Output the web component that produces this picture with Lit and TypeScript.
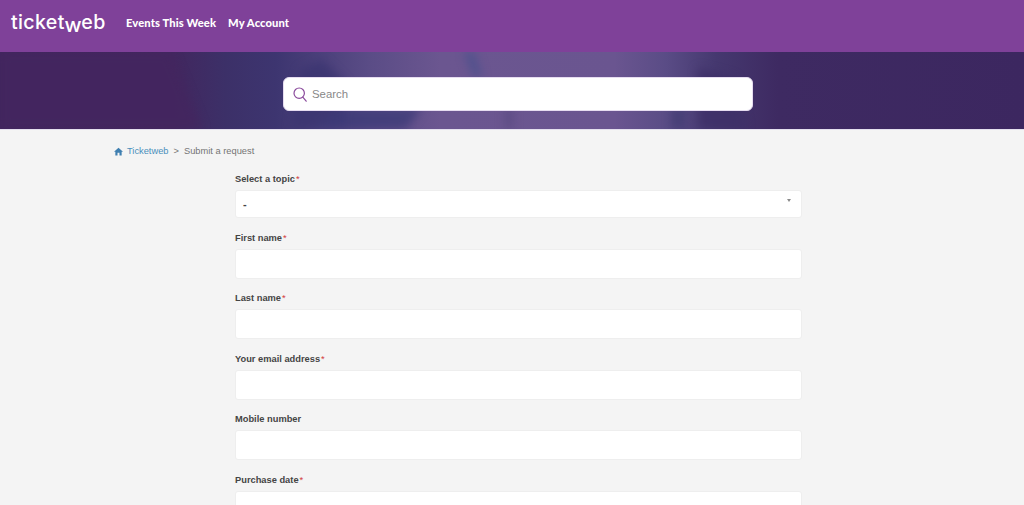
import { css, html, LitElement } from "lit";
import { customElement } from "lit/decorators.js";

const fields = [
  { label: "First name", required: true },
  { label: "Last name", required: true },
  { label: "Your email address", required: true },
  { label: "Mobile number", required: false },
  { label: "Purchase date", required: true },
];

@customElement("app-root")
export class AppRoot extends LitElement {
  render() {
    return html`
      <header class="topbar">
        <a class="logo">ticket<span class="logo-w">w</span>eb</a>
        <nav>
          <a>Events This Week</a>
          <a>My Account</a>
        </nav>
      </header>

      <section class="hero">
        <!-- blurred shapes of the banner photo -->
        <svg class="photo" viewBox="0 0 1024 77" preserveAspectRatio="none">
          <polygon points="0,-6 168,-6 205,85 0,85" fill="#43265f" opacity="0.8"></polygon>
          <polygon points="300,18 322,8 345,30 345,85 290,85" fill="#3b3470" opacity="0.8"></polygon>
          <polygon points="464,0 474,0 482,24 474,26" fill="#48508c" opacity="0.8"></polygon>
          <polygon points="340,56 422,56 400,85 300,85" fill="#3d3b78" opacity="0.8"></polygon>
          <polygon points="698,16 735,26 748,85 699,85" fill="#3d2f68" opacity="0.8"></polygon>
          <rect x="505" y="56" width="8" height="30" fill="#55477f" opacity="0.7"></rect>
          <rect x="672" y="56" width="12" height="30" fill="#3f3a72" opacity="0.7"></rect>
        </svg>
        <div class="search">
          <svg width="14" height="15" viewBox="0 0 14 15" fill="none" stroke="#8a4a9c" stroke-width="1.2">
            <circle cx="6.2" cy="6.2" r="5.2"></circle>
            <path d="M9.8 10.2l3.4 4" stroke-linecap="round"></path>
          </svg>
          <span>Search</span>
        </div>
      </section>

      <main>
        <div class="crumbs">
          <svg width="9" height="9" viewBox="0 0 10 10" fill="#3f7fb0">
            <path d="M5 .8L0 5.2h1.5V9.5h2.4V6.5h2.2v3h2.4V5.2H10z"></path>
          </svg>
          <a>Ticketweb</a>
          <span class="sep">&gt;</span>
          <span>Submit a request</span>
        </div>

        <form>
          <div class="field first">
            <label>Select a topic<b>*</b></label>
            <div class="box select">
              <span>-</span>
              <i class="caret"></i>
            </div>
          </div>
          ${fields.map(
            (f) => html`
              <div class="field">
                <label>${f.label}${f.required ? html`<b>*</b>` : ""}</label>
                <div class="box"></div>
              </div>
            `
          )}
        </form>
      </main>
    `;
  }

  static styles = css`
    :host {
      display: block;
      height: 505px;
      overflow: hidden;
      background: #f4f4f4;
      font-family: "Liberation Sans", Arial, sans-serif;
      color: #444;
    }

    .topbar {
      height: 52px;
      background: #7f4199;
      display: flex;
      align-items: center;
      padding-left: 11px;
      box-sizing: border-box;
      color: #fff;
    }

    .logo {
      font-family: "Inter", sans-serif;
      font-weight: 500;
      font-size: 19.6px;
      letter-spacing: 0.35px;
      width: 115px;
      line-height: 1;
      margin-top: -7px;
    }

    .logo-w {
      display: inline-block;
      transform: translateY(3px) scaleX(1.05);
    }

    nav {
      display: flex;
      gap: 12px;
      font-family: "Lato", sans-serif;
      font-weight: 900;
      font-size: 11.2px;
      letter-spacing: 0.1px;
      margin-top: -8px;
    }

    .hero {
      position: relative;
      overflow: hidden;
      height: 78px;
      display: flex;
      justify-content: center;
      padding: 25px 0 0 12px;
      box-sizing: border-box;
      background: linear-gradient(
        90deg,
        #41265f 0%,
        #42275f 17%,
        #3c3068 22%,
        #3d3570 27%,
        #5a4c86 36%,
        #6b5690 43%,
        #6a5590 60%,
        #5a4c86 65%,
        #45386f 70%,
        #3e2a62 76%,
        #3c2760 100%
      );
      border-bottom: 1px solid #e4e0ee;
    }

    .photo {
      position: absolute;
      inset: 0;
      width: 100%;
      height: 100%;
      filter: blur(5px);
    }

    .search {
      position: relative;
      width: 470px;
      height: 34px;
      background: #fff;
      border: 1px solid #e6dcf0;
      border-radius: 6px;
      display: flex;
      align-items: center;
      gap: 5px;
      padding-left: 9px;
      box-sizing: border-box;
      color: #888;
      font-size: 11.4px;
    }

    main {
      padding: 15px 0 0 114px;
    }

    .crumbs {
      display: flex;
      align-items: center;
      gap: 4px;
      font-size: 9.3px;
      line-height: 12px;
      color: #757575;
    }

    .crumbs a {
      color: #4b90bc;
    }

    .sep {
      margin: 0 1px;
    }

    form {
      width: 567px;
      margin-left: 121px;
    }

    .field {
      margin-top: 13.5px;
    }

    .field.first {
      margin-top: 15.5px;
    }

    label {
      display: block;
      font-size: 9.3px;
      font-weight: 700;
      line-height: 12px;
      margin-bottom: 5px;
    }

    label b {
      color: #d23c3c;
      margin-left: 1px;
      font-weight: 400;
    }

    .box {
      height: 30px;
      background: #fff;
      border: 1px solid #eee;
      border-radius: 3px;
      box-sizing: border-box;
    }

    .select {
      height: 28.5px;
      display: flex;
      align-items: center;
      justify-content: space-between;
      padding: 0 10px 0 7px;
      font-size: 11px;
      font-weight: 700;
    }

    .caret {
      width: 0;
      height: 0;
      border-left: 2px solid transparent;
      border-right: 2px solid transparent;
      border-top: 3px solid #8a8a8a;
      margin-top: -6px;
    }
  `;
}
